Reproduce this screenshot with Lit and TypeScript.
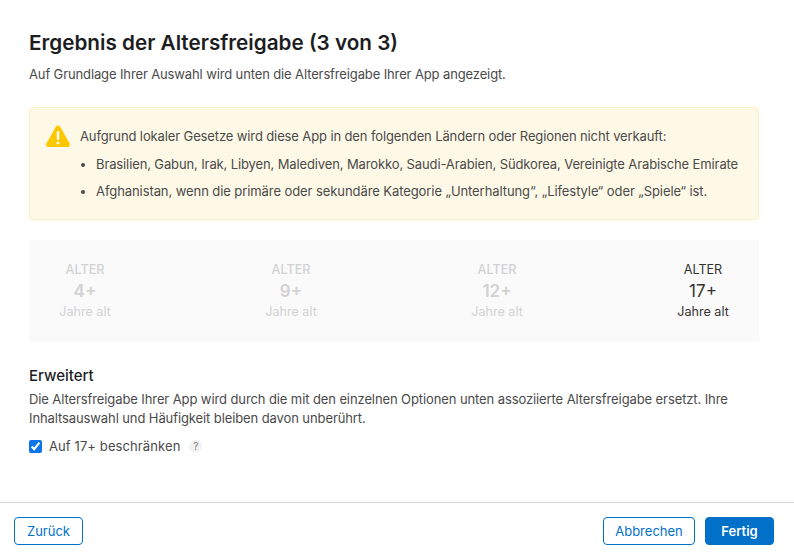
import { LitElement, html, css } from "lit";
import { customElement } from "lit/decorators.js";

const ratings = [
  { age: "4+", on: false },
  { age: "9+", on: false },
  { age: "12+", on: false },
  { age: "17+", on: true },
];

@customElement("app-root")
export class AppRoot extends LitElement {
  static styles = css`
    :host {
      display: flex;
      flex-direction: column;
      width: 794px;
      height: 553px;
      background: #fff;
      font-family: Inter, "Liberation Sans", sans-serif;
      color: #4a4a4a;
      overflow: hidden;
    }
    .body {
      flex: 1;
      padding: 30px 35px 0 29px;
      min-height: 0;
    }
    h1 {
      margin: 0;
      font-size: 20.7px;
      line-height: 26px;
      font-weight: 600;
      color: #1d1d1f;
    }
    .sub {
      margin: 9px 0 0;
      font-size: 13px;
      letter-spacing: -0.125px;
      line-height: 18px;
    }
    .notice {
      margin-top: 24px;
      height: 113px;
      box-sizing: border-box;
      border: 1px solid #fdf0c0;
      border-radius: 4px;
      background: #fef9e6;
      padding: 16px 15px;
      display: flex;
      gap: 9px;
      font-size: 13px;
      letter-spacing: -0.12px;
      line-height: 18px;
    }
    .notice svg { flex: none; width: 26px; height: 24px; }
    .notice p { margin: 3px 0 0; }
    .notice ul { margin: 0; padding: 0 0 0 16px; }
    .notice li { margin-top: 10px; }
    .notice li + li { margin-top: 9px; letter-spacing: -0.08px; }
    .strip {
      margin-top: 20px;
      height: 102px;
      box-sizing: border-box;
      background: #fafafa;
      padding: 21px 30px 0;
      display: flex;
      justify-content: space-between;
    }
    .rating {
      width: 52px;
      display: flex;
      flex-direction: column;
      align-items: center;
      white-space: nowrap;
      color: #d2d2d4;
    }
    .rating.on { color: #333; }
    .label { font-size: 12.6px; line-height: 18px; font-weight: 500; }
    .age { font-size: 17px; line-height: 24px; font-weight: 600; }
    .rating.on .label, .rating.on .age { font-weight: 400; }
    .years { font-size: 12.6px; line-height: 18px; }
    h2 {
      margin: 24px 0 0;
      font-size: 15px;
      line-height: 20px;
      font-weight: 500;
      color: #1d1d1f;
    }
    .desc {
      margin: 4px 0 0;
      font-size: 13px;
      letter-spacing: -0.1px;
      line-height: 19px;
    }
    .check {
      margin-top: 9px;
      display: flex;
      align-items: center;
      font-size: 13px;
      letter-spacing: 0.1px;
      line-height: 18px;
    }
    .check input {
      margin: 0 7px 0 0;
      width: 13px;
      height: 13px;
      accent-color: #0a74e8;
    }
    .help {
      margin-left: 9px;
      width: 13px;
      height: 13px;
      border-radius: 50%;
      background: #f2f2f2;
      color: #777;
      font-size: 10px;
      line-height: 13px;
      text-align: center;
    }
    footer {
      height: 51px;
      box-sizing: border-box;
      border-top: 1px solid #d6d6d6;
      padding: 14px 20px 0 14px;
      display: flex;
      gap: 10px;
    }
    button {
      height: 28px;
      box-sizing: border-box;
      border: 1px solid #0070c9;
      border-radius: 4px;
      background: #fff;
      color: #0070c9;
      font: 400 13px Inter, "Liberation Sans", sans-serif;
      padding: 0;
    }
    .back { width: 69px; margin-right: auto; }
    .cancel { width: 92px; }
    .done { width: 69px; background: #0070c9; color: #fff; font-weight: 600; }
  `;

  render() {
    return html`
      <div class="body">
        <h1>Ergebnis der Altersfreigabe (3 von 3)</h1>
        <p class="sub">Auf Grundlage Ihrer Auswahl wird unten die Altersfreigabe Ihrer App angezeigt.</p>
        <div class="notice">
          <svg viewBox="0 0 26 24">
            <path d="M13 1.5c1 0 1.7.5 2.3 1.5l9.3 16.400c.9 1.700-.1 3.600-2.100 3.600H3.500c-2 0-3-1.900-2.100-3.600L10.700 3c.6-1 1.300-1.500 2.300-1.500z" fill="#fdc700"/>
            <rect x="11.800" y="7" width="2.400" height="9" rx="1.200" fill="#fff"/>
            <circle cx="13" cy="19" r="1.500" fill="#fff"/>
          </svg>
          <div>
            <p>Aufgrund lokaler Gesetze wird diese App in den folgenden Ländern oder Regionen nicht verkauft:</p>
            <ul>
              <li>Brasilien, Gabun, Irak, Libyen, Malediven, Marokko, Saudi-Arabien, Südkorea, Vereinigte Arabische Emirate</li>
              <li>Afghanistan, wenn die primäre oder sekundäre Kategorie „Unterhaltung“, „Lifestyle“ oder „Spiele“ ist.</li>
            </ul>
          </div>
        </div>
        <div class="strip">
          ${ratings.map(
            (r) => html`
              <div class="rating ${r.on ? "on" : ""}">
                <span class="label">ALTER</span>
                <span class="age">${r.age}</span>
                <span class="years">Jahre alt</span>
              </div>
            `
          )}
        </div>
        <h2>Erweitert</h2>
        <p class="desc">Die Altersfreigabe Ihrer App wird durch die mit den einzelnen Optionen unten assoziierte Altersfreigabe ersetzt. Ihre Inhaltsauswahl und Häufigkeit bleiben davon unberührt.</p>
        <label class="check">
          <input type="checkbox" checked />
          Auf 17+ beschränken
          <span class="help">?</span>
        </label>
      </div>
      <footer>
        <button class="back">Zurück</button>
        <button class="cancel">Abbrechen</button>
        <button class="done">Fertig</button>
      </footer>
    `;
  }
}
